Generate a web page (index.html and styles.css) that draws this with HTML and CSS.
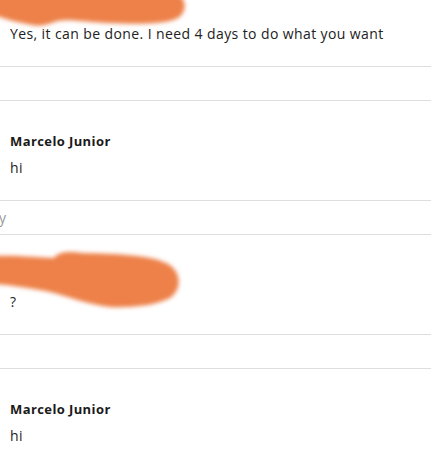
FILE: index.html
```html
<!DOCTYPE html>
<html>
<meta charset="utf-8">
<link rel="stylesheet" href="styles.css">

<head>
<title>Messages</title>
</head>

<body>

<div class="thread">

  <div class="msg">
    <div class="name">&nbsp;</div>
    <div class="text">Yes, it can be done. I need 4 days to do what you want</div>
  </div>
  <div class="day"><span class="cut comma">,</span></div>

  <div class="msg">
    <div class="name">Marcelo Junior</div>
    <div class="text">hi</div>
  </div>
  <div class="day"><span class="cut">y</span></div>

  <div class="msg">
    <div class="name">&nbsp;</div>
    <div class="text">?</div>
  </div>
  <div class="day"></div>

  <div class="msg">
    <div class="name">Marcelo Junior</div>
    <div class="text">hi</div>
  </div>

</div>

<!-- scribbles over the hidden names -->
<svg class="scribble" width="431" height="449">
  <defs>
    <filter id="soft" x="-10%" y="-30%" width="120%" height="160%">
      <feGaussianBlur stdDeviation="2"/>
    </filter>
  </defs>
  <path filter="url(#soft)" d="M -6 -6 L 178 -6 C 187 0, 187 12, 178 18 C 166 25, 135 24, 105 23
    C 85 22, 68 19, 58 21 C 48 24, 42 27, 32 25 C 20 23, 8 20, -6 15 Z"/>
  <path filter="url(#soft)" d="M -6 256 C 18 255, 42 258, 54 258 C 58 252, 68 251, 82 253
    C 112 254, 150 254, 168 264 C 182 272, 182 290, 170 298 C 155 306, 128 308, 110 307
    C 90 305, 70 297, 50 292 C 30 288, 10 285, -6 284 Z"/>
</svg>

</body>
</html>
```

FILE: styles.css
```css
body {
  margin: 0;
  background: #fff;
  font: 14px "Open Sans", sans-serif;
  color: #222;
  overflow: hidden;
}

.thread {
  margin-top: -33px;
}

.msg {
  padding: 31px 10px 22px;
  border-bottom: 1px solid #dedede;
}

.name {
  font-size: 13px;
  line-height: 18px;
  font-weight: bold;
  letter-spacing: 0.4px;
  color: #1a1a1a;
  margin-bottom: 8px;
}

.text {
  line-height: 20px;
  letter-spacing: 0.4px;
}

.day {
  height: 33px;
  line-height: 33px;
  border-bottom: 1px solid #dedede;
  color: #999;
  overflow: hidden;
}

.cut {
  margin-left: -1px;
}

.comma {
  margin-left: -3px;
}

.scribble {
  position: absolute;
  top: 0;
  left: 0;
  pointer-events: none;
}

.scribble path {
  fill: #ed8149;
}
```
